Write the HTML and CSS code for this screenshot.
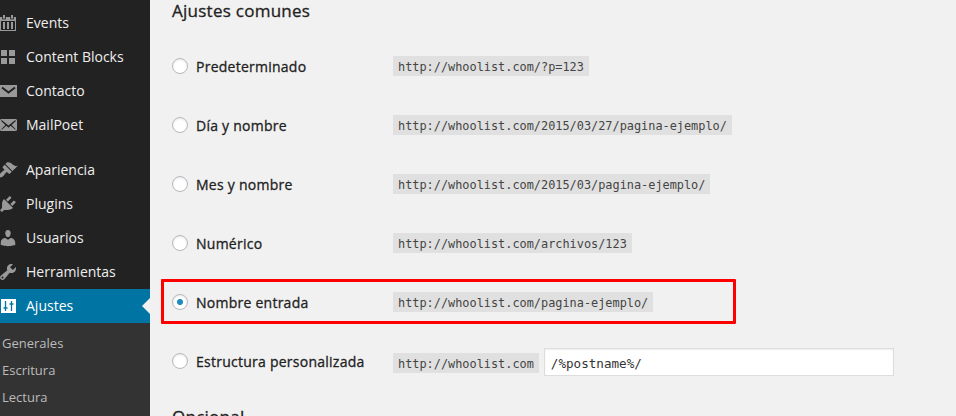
FILE: index.html
```html
<!DOCTYPE html>
<html lang="es">
<head>
<meta charset="utf-8">
<title>Ajustes de enlaces permanentes</title>
<link rel="stylesheet" href="styles.css">
</head>
<body>
<div class="layout">
  <nav class="sidebar">
    <ul class="menu">
      <li class="item"><svg class="icon" viewBox="0 0 18 20"><path fill-rule="evenodd" d="M0 4h16v14H0zM1 8v9h14V8z"/><path class="cut-thin" d="M2.500 4v2h3V4M10.500 4v2h3V4"/><path d="M3 9h2v7H3zM7 9h2v7H7zM11 9h2v7h-2zM3 2h2v3H3zM11 2h2v3h-2z"/></svg><span>Events</span></li>
      <li class="item"><svg class="icon" viewBox="0 0 18 20"><path d="M1 3h6v6H1zM9 3h6v6H9zM1 11h6v6H1zM9 11h6v6H9z"/></svg><span>Content Blocks</span></li>
      <li class="item"><svg class="icon" viewBox="0 0 18 20"><path d="M0 4h17v12H0z"/><path class="cut" d="M2 6.500l6.500 5 6.500-5"/></svg><span>Contacto</span></li>
      <li class="item"><svg class="icon" viewBox="2 0 18 20"><path d="M19 14.500v-9c0-.83-.67-1.500-1.500-1.500H3.490c-.83 0-1.500.67-1.500 1.500v9c0 .83.67 1.500 1.500 1.500H17.500c.83 0 1.500-.67 1.500-1.500zm-1.310-9.110c.33.33.15.67-.03.84L13.600 9.950l3.900 4.060c.12.14.2.36.06.51-.13.16-.43.15-.56.05l-4.370-3.730-2.140 1.950-2.130-1.950-4.370 3.730c-.13.1-.43.11-.56-.05-.14-.15-.06-.37.06-.51l3.900-4.060-4.060-3.720c-.18-.17-.36-.51-.03-.84s.67-.17.95.07l6.240 5.040 6.250-5.040c.28-.24.62-.4.950-.07z"/></svg><span>MailPoet</span></li>
      <li class="item item-group"><svg class="icon" viewBox="2 0 18 20"><path d="M14.480 11.060L7.410 3.990l1.500-1.500c.5-.56 2.300-.47 3.510.32 1.210.8 1.430 1.280 2.910 2.100 1.180.64 2.450 1.260 4.450.85zm-.71.71L6.700 4.700 4.930 6.470c-.39.39-.39 1.020 0 1.410l1.060 1.060c.39.39.39 1.030 0 1.420-.6.6-1.430 1.110-2.210 1.690-.35.26-.7.53-1.010.84C1.430 14.230.4 16.080 1.400 17.070c.99 1 2.840-.03 4.180-1.360.31-.31.58-.66.85-1.020.57-.78 1.080-1.610 1.690-2.210.39-.39 1.020-.39 1.410 0l1.060 1.060c.39.39 1.020.39 1.410 0z"/></svg><span>Apariencia</span></li>
      <li class="item"><svg class="icon" viewBox="2 0 18 20"><path d="M13.110 4.360L9.870 7.600 8 5.730l3.240-3.240c.35-.34 1.050-.2 1.560.32.52.51.66 1.210.31 1.550zm-8 1.770l.91-1.120 9.010 9.010-1.190.84c-.71.71-2.630 1.160-3.820 1.160H6.140L4.900 17.260c-.59.59-1.540.59-2.120 0-.59-.58-.59-1.530 0-2.120l1.240-1.240v-3.880c0-1.130.4-3.190 1.090-3.890zm7.260 3.970l3.240-3.240c.34-.35 1.040-.21 1.550.31.52.51.66 1.210.31 1.550l-3.240 3.250z"/></svg><span>Plugins</span></li>
      <li class="item"><svg class="icon" viewBox="2 0 18 20"><path d="M10 9.250c-2.270 0-2.730-3.440-2.730-3.440C7 4.020 7.820 2 9.970 2c2.160 0 2.980 2.020 2.710 3.810 0 0-.41 3.440-2.680 3.440zm0 2.570L12.720 10c2.390 0 4.520 2.330 4.520 4.530v2.490s-3.650 1.130-7.240 1.130c-3.650 0-7.240-1.130-7.240-1.130v-2.490c0-2.250 1.940-4.480 4.470-4.480z"/></svg><span>Usuarios</span></li>
      <li class="item"><svg class="icon" viewBox="2 0 18 20"><path d="M16.680 9.770c-1.340 1.340-3.300 1.670-4.950.99l-5.410 6.520c-.99.99-2.590.99-3.580 0s-.99-2.590 0-3.570l6.520-5.420c-.68-1.650-.35-3.610.99-4.950 1.280-1.280 3.120-1.620 4.720-1.060l-2.890 2.890 2.820 2.820 2.860-2.870c.53 1.580.18 3.390-1.080 4.650zM3.810 16.210c.4.39 1.040.39 1.430 0 .4-.4.4-1.040 0-1.430-.39-.4-1.030-.4-1.430 0-.39.39-.39 1.030 0 1.430z"/></svg><span>Herramientas</span></li>
      <li class="item current"><svg class="icon" viewBox="0 0 18 20"><path d="M1 3h15v14H1z"/><path class="cut-blue" d="M5.500 5v10M3.500 12h4M11.500 5v10M9.500 8h4"/></svg><span>Ajustes</span></li>
    </ul>
    <ul class="submenu">
      <li>Generales</li>
      <li>Escritura</li>
      <li>Lectura</li>
    </ul>
  </nav>
  <main class="content">
    <h3 class="title">Ajustes comunes</h3>
    <div class="options">
      <div class="row"><label class="choice"><input type="radio" name="structure" class="radio"><span>Predeterminado</span></label><code>http://whoolist.com/?p=123</code></div>
      <div class="row"><label class="choice"><input type="radio" name="structure" class="radio"><span>Día y nombre</span></label><code>http://whoolist.com/2015/03/27/pagina-ejemplo/</code></div>
      <div class="row"><label class="choice"><input type="radio" name="structure" class="radio"><span>Mes y nombre</span></label><code>http://whoolist.com/2015/03/pagina-ejemplo/</code></div>
      <div class="row"><label class="choice"><input type="radio" name="structure" class="radio"><span>Numérico</span></label><code>http://whoolist.com/archivos/123</code></div>
      <div class="row marked"><label class="choice"><input type="radio" name="structure" class="radio" checked><span>Nombre entrada</span></label><code>http://whoolist.com/pagina-ejemplo/</code></div>
      <div class="row custom"><label class="choice"><input type="radio" name="structure" class="radio"><span>Estructura personalizada</span></label><code>http://whoolist.com</code><input type="text" class="field" value="/%postname%/"></div>
    </div>
    <h3 class="title">Opcional</h3>
  </main>
</div>
</body>
</html>
```
FILE: styles.css
```css
*, *::after { box-sizing: border-box; }

body {
  margin: 0;
  overflow: hidden;
  background: #f1f1f1;
  color: #222;
  font: 14px/20px "Open Sans", sans-serif;
}

ul { margin: 0; padding: 0; list-style: none; }

.layout { display: flex; height: 416px; overflow: hidden; }

.sidebar {
  display: flex;
  flex-direction: column;
  flex: none;
  width: 150px;
  background: #222;
  color: #eee;
}

.menu { padding-top: 6px; }

.item {
  position: relative;
  display: flex;
  align-items: center;
  gap: 8px;
  height: 34px;
  white-space: nowrap;
}

.item-group { margin-top: 11px; }

.icon { flex: none; width: 18px; height: 20px; fill: #999; }

.cut { fill: none; stroke: #222; stroke-width: 2; }
.cut-thin { fill: none; stroke: #222; stroke-width: .8; }
.cut-blue { fill: none; stroke: #0074a2; stroke-width: 1.3; }

.current { background: #0074a2; color: #fff; }
.current .icon { fill: #fff; }
.current::after {
  content: "";
  position: absolute;
  right: 0;
  top: 9px;
  border: 8px solid transparent;
  border-left: 0;
  border-right-color: #f1f1f1;
}

.submenu {
  flex: 1;
  padding: 7px 2px;
  background: #333;
  color: #bbb;
  font-size: 13px;
  line-height: 27px;
}

.content { flex: 1; padding-left: 22px; }

.title {
  margin: 0;
  font-size: 17px;
  font-weight: 500;
  letter-spacing: .26px;
  line-height: 22px;
  -webkit-text-stroke: .3px #222;
}

.options { height: 384px; padding-top: 14px; }

.row {
  position: relative;
  display: flex;
  align-items: flex-start;
  height: 59px;
  padding-top: 20px;
}

.choice {
  display: flex;
  gap: 8px;
  width: 221px;
  padding-top: 1px;
  font-weight: 500;
  letter-spacing: .25px;
  white-space: nowrap;
  -webkit-text-stroke: .3px #222;
}

.radio {
  appearance: none;
  flex: none;
  width: 16px;
  height: 16px;
  margin: 1px 0 0;
  border: 1px solid #b4b9be;
  border-radius: 50%;
  background: #fff;
  box-shadow: inset 0 1px 2px rgba(0, 0, 0, .1);
}

.radio:checked { background: radial-gradient(circle, #1e8cbe 2.700px, #fff 3.300px); }

code {
  flex: none;
  height: 20px;
  padding: 1px 5px 0;
  background: #e0e0e0;
  color: #444;
  font: 11.880px/20px "DejaVu Sans Mono", monospace;
}

.marked::after {
  content: "";
  position: absolute;
  left: -11px;
  top: 7px;
  width: 575px;
  height: 45px;
  border: 3px solid #f00;
  border-radius: 1px;
}

.custom code { margin-top: 2px; }

.field {
  width: 350px;
  height: 28px;
  margin: -3px 0 0 5px;
  padding: 3px 6px 1px;
  border: 1px solid #ddd;
  background: #fff;
  box-shadow: inset 0 1px 2px rgba(0, 0, 0, .07);
  color: #333;
  font: 12.600px "DejaVu Sans Mono", monospace;
}
```
